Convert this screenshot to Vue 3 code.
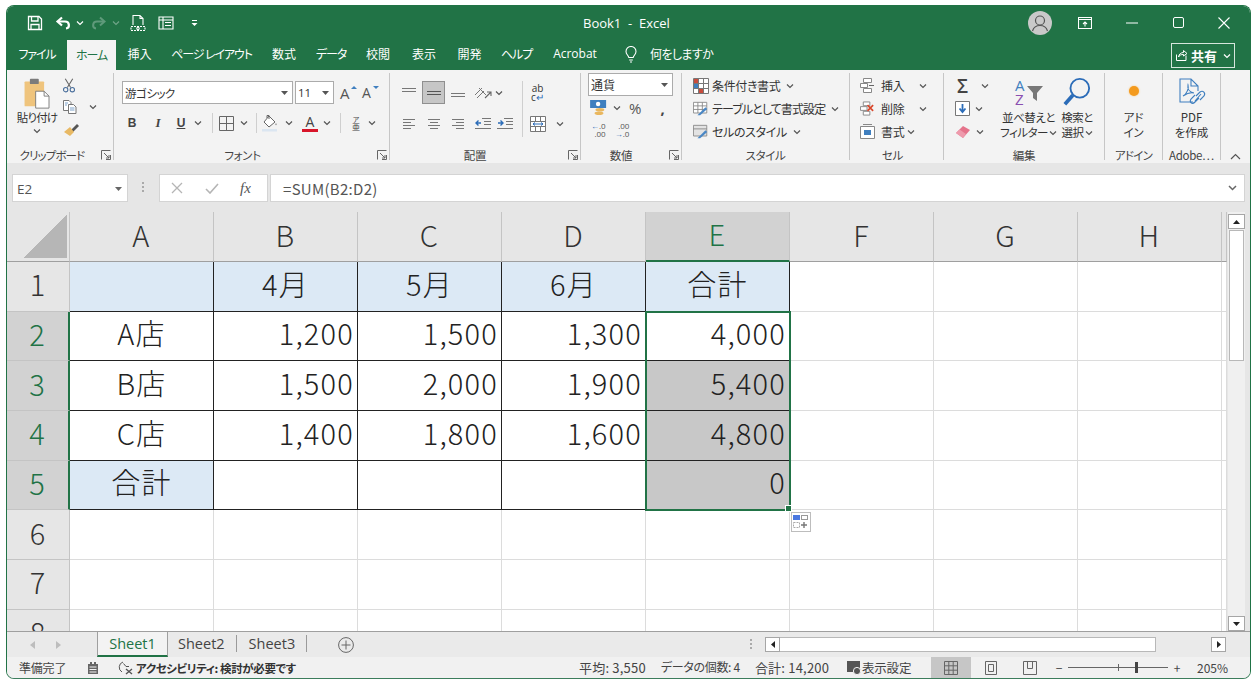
<script setup>
import { h } from 'vue'

// small ribbon chevron
const Chev = () => h('svg', { width: 8, height: 6, viewBox: '0 0 8 6' }, [
  h('path', { d: 'M1 1.5 L4 4.5 L7 1.5', fill: 'none', stroke: '#555', 'stroke-width': 1.2 })
])
// dialog launcher in the group label
const Launcher = () => h('svg', { width: 10, height: 10, viewBox: '0 0 10 10' }, [
  h('path', { d: 'M.5 9.5V.5H9.5M9.5 5V9.5H5M3 3L8 8M8 5V8H5', fill: 'none', stroke: '#666', 'stroke-width': 1 })
])

const tabs = ['ファイル', 'ホーム', '挿入', 'ページ レイアウト', '数式', 'データ', '校閲', '表示', '開発', 'ヘルプ', 'Acrobat']
const cols = ['A', 'B', 'C', 'D', 'E', 'F', 'G', 'H', 'I']
const table = [
  ['', '4月', '5月', '6月', '合計'],
  ['A店', '1,200', '1,500', '1,300', '4,000'],
  ['B店', '1,500', '2,000', '1,900', '5,400'],
  ['C店', '1,400', '1,800', '1,600', '4,800'],
  ['合計', '', '', '', '0']
]
const rowNums = [1, 2, 3, 4, 5, 6, 7, 8]

const isKana = t => /[ァ-ヶー]/.test(t)

function cellText(r, c) {
  return table[r - 1] && table[r - 1][c] !== undefined ? table[r - 1][c] : ''
}
function cellClass(r, c) {
  const inTable = r <= 5 && c <= 4
  return {
    dark: inTable,
    blue: inTable && (r === 1 || (r === 5 && c === 0)),
    center: r === 1 || c === 0,
    picked: c === 4 && r >= 3 && r <= 5
  }
}
</script>

<template>
  <div class="window">
    <!-- title bar -->
    <header class="titlebar">
      <div class="qat">
        <svg width="16" height="16" viewBox="0 0 16 16" fill="none" stroke="#fff" stroke-width="1.3"><path d="M1.5 1.5H12L14.5 4V14.5H1.5Z"/><path d="M4.5 1.5V6H11V1.5M4 14.5V9.5H12V14.5"/></svg>
        <svg class="q-undo" width="18" height="14" viewBox="0 0 18 14" fill="none" stroke="#fff" stroke-width="2.2"><path d="M7 1.5L2.5 5.5L7 9.5"/><path d="M3 5.5H10C15 5.5 15 12 11 12.5"/></svg>
        <Chev class="q-white" />
        <svg class="q-redo" width="18" height="14" viewBox="0 0 18 14" fill="none" stroke="#5f9a7b" stroke-width="2"><path d="M11 1.5L15.5 5.5L11 9.5"/><path d="M15 5.5H8C3 5.5 3 12 7 12.5"/></svg>
        <Chev class="q-dim" />
        <svg class="q-doc" width="16" height="18" viewBox="0 0 16 18" fill="none" stroke="#fff" stroke-width="1.1"><path d="M3 11V1.5H10L13 4.5V11M10 1.5V4.5H13"/><path d="M1 12.5H15V16.5H1Z" stroke-dasharray="2 1"/><circle cx="8" cy="14.5" r="1.2"/></svg>
        <svg class="q-form" width="16" height="14" viewBox="0 0 16 14" fill="none" stroke="#fff" stroke-width="1.1"><path d="M1 1H15V13H1ZM1 4H15M5 1V13M7 6.5H13M7 9.5H13"/></svg>
        <svg class="q-drop" width="7" height="8" viewBox="0 0 7 8" fill="#fff"><path d="M1 1H6V2H1ZM.5 4H6.5L3.5 7Z"/></svg>
      </div>
      <div class="doc-title">Book1 &nbsp;-&nbsp; Excel</div>
      <div class="win-btns">
        <span class="avatar">
          <svg width="24" height="24" viewBox="0 0 24 24" fill="none" stroke="#555" stroke-width="1.2"><circle cx="12" cy="9.5" r="4.5"/><path d="M4.5 20C6 15 9 14.5 12 14.5S18 15 19.5 20"/></svg>
        </span>
        <svg class="b-display" width="14" height="12" viewBox="0 0 14 12" fill="none" stroke="#fff" stroke-width="1.1"><path d="M.5 .5H13.5V11.5H.5ZM.5 2.5H13.5"/><path d="M7 9.5V5M5 7L7 5L9 7"/></svg>
        <svg class="b-min" width="12" height="2" viewBox="0 0 12 2" stroke="#fff"><path d="M0 1H12"/></svg>
        <svg class="b-max" width="11" height="11" viewBox="0 0 11 11" fill="none" stroke="#fff"><rect x=".5" y=".5" width="10" height="10" rx="1.5"/></svg>
        <svg class="b-close" width="12" height="12" viewBox="0 0 12 12" stroke="#fff" stroke-width="1.1"><path d="M.5 .5L11.5 11.5M11.5 .5L.5 11.5"/></svg>
      </div>
    </header>

    <!-- ribbon tabs -->
    <nav class="tabbar">
      <div class="tabs">
        <span v-for="(t, i) in tabs" :key="t" class="tab" :class="{ active: i === 1, kana: isKana(t) }">{{ t }}</span>
      </div>
      <svg class="bulb" width="12" height="18" viewBox="0 0 12 18" fill="none" stroke="#fff" stroke-width="1.1"><path d="M3.8 11.5C3.5 9.5 1 8.5 1 5.5A5 5 0 0 1 11 5.5C11 8.5 8.5 9.5 8.2 11.5ZM4.2 14H7.8M5 16H7"/></svg>
      <span class="tell">何をしますか</span>
      <span class="share">
        <svg width="13" height="13" viewBox="0 0 13 13" fill="none" stroke="#fff"><path d="M1.5 5.5V11.5H11V6.5M3.5 8C4 5 6 3.5 8.5 3.5V1.5L12 4.5L8.5 7V5.5C6 5.5 4.5 6 3.5 8Z"/></svg>
        <b>共有</b>
        <Chev class="q-white" />
      </span>
    </nav>

    <!-- ribbon -->
    <section class="ribbon">
      <div class="group g-clip">
        <div class="body clip-body">
          <div class="paste">
            <svg width="28" height="32" viewBox="0 0 30 36"><rect x="1" y="5" width="22" height="28" rx="1" fill="#efc47d"/><rect x="7" y="2" width="10" height="6" rx="1" fill="#7b7b7b"/><path d="M13.5 16H23L28.5 21.5V35H13.5Z" fill="#fff" stroke="#777"/><path d="M23 16V21.5H28.5" fill="none" stroke="#777"/></svg>
            <span class="paste-label">貼り付け</span>
            <Chev />
          </div>
          <div class="clip-tools">
            <svg width="14" height="15" viewBox="0 0 16 18" fill="none" stroke="#4a6f9c" stroke-width="1.3"><path d="M3.5 1L10 11.5M12.5 1L6 11.5" stroke="#666"/><circle cx="4" cy="14" r="2.6"/><circle cx="12" cy="14" r="2.6"/></svg>
            <span class="copy-row">
              <svg width="16" height="16" viewBox="0 0 16 16" fill="#fff" stroke="#777"><path d="M1.5 1.5H7L9 3.5V11.5H1.5Z"/><path d="M6.5 5.5H11.5L14 8V14.5H6.5Z"/><path d="M8 9H12.5M8 11H12.5M3 4H6M3 6H5" stroke="#7aa0c8"/></svg>
              <Chev />
            </span>
            <svg width="18" height="16" viewBox="0 0 18 16"><path d="M9 9L15 3L17 5L11 11Z" fill="#555"/><path d="M2 11L8 6L12 11L8 15Z" fill="#e8b964"/></svg>
          </div>
        </div>
        <div class="glabel">クリップボード<Launcher class="launch" /></div>
      </div>

      <div class="group g-font">
        <div class="body font-body">
          <div class="font-row">
            <span class="combo c-name"><span>游ゴシック</span><svg width="7" height="4" viewBox="0 0 7 4" fill="#555"><path d="M0 0H7L3.5 4Z"/></svg></span>
            <span class="combo c-size"><span>11</span><svg width="7" height="4" viewBox="0 0 7 4" fill="#555"><path d="M0 0H7L3.5 4Z"/></svg></span>
            <span class="grow-a">A<i class="up"></i></span>
            <span class="grow-a small">A<i class="down"></i></span>
          </div>
          <div class="font-tools">
            <b class="tool-b">B</b>
            <i class="tool-i">I</i>
            <u class="tool-u">U</u>
            <Chev />
            <span class="vsep"></span>
            <svg width="15" height="15" viewBox="0 0 15 15" fill="none" stroke="#666"><path d="M.5 .5H14.5V14.5H.5ZM7.5 .5V14.5M.5 7.5H14.5"/></svg>
            <Chev />
            <span class="vsep"></span>
            <svg width="18" height="18" viewBox="0 0 18 18" fill="none"><path d="M8 2L14 8L8 13L3 8Z" fill="#fff" stroke="#666"/><path d="M6 4V1.5H8V5" stroke="#666"/><path d="M15 9C17 12 13 12 15 9Z" fill="#777"/><rect x="1" y="15" width="15" height="2.5" fill="#dbe6f1"/></svg>
            <Chev />
            <span class="color-a">A</span>
            <Chev />
            <span class="vsep"></span>
            <span class="phonetic"><small>ア</small>亜</span>
            <Chev />
          </div>
        </div>
        <div class="glabel">フォント<Launcher class="launch" /></div>
      </div>

      <div class="group g-align">
        <div class="body align-body">
          <div class="align-grid">
            <svg class="ln" width="14" height="12" viewBox="0 0 14 12" stroke="#777"><path d="M0 1.5H14M0 4.5H14"/></svg>
            <span class="a-on"><svg width="14" height="12" viewBox="0 0 14 12" stroke="#555"><path d="M0 4.5H14M0 7.5H14"/></svg></span>
            <svg class="ln" width="14" height="12" viewBox="0 0 14 12" stroke="#777"><path d="M0 6.5H14M0 9.5H14"/></svg>
            <svg width="18" height="16" viewBox="0 0 18 16" fill="none" stroke="#777"><path d="M1 10L8 3M3 13L10 6M5 3L12 10" stroke-width="1"/><path d="M11 13L17 7M13 7H17V11" stroke="#666" stroke-width="1.1"/></svg>
            <Chev class="start" />
            <span class="vsep tall"></span>
            <span class="wrap-ab"><span>ab</span><span>c<em>↵</em></span></span>
            <span></span>

            <svg width="12" height="11" viewBox="0 0 12 11" stroke="#777"><path d="M0 1.5H12M0 4.5H8M0 7.5H12M0 10.5H8"/></svg>
            <svg width="12" height="11" viewBox="0 0 12 11" stroke="#777"><path d="M0 1.5H12M2 4.5H10M0 7.5H12M2 10.5H10"/></svg>
            <svg width="12" height="11" viewBox="0 0 12 11" stroke="#777"><path d="M0 1.5H12M4 4.5H12M0 7.5H12M4 10.5H12"/></svg>
            <svg width="16" height="13" viewBox="0 0 16 13" fill="none"><path d="M7 1.5H16M9 4.5H16M9 7.5H16M0 11.5H16" stroke="#777"/><path d="M6 6H1M3.5 3.5L1 6L3.5 8.5" stroke="#2b6cb8" stroke-width="1.4"/></svg>
            <svg width="16" height="13" viewBox="0 0 16 13" fill="none"><path d="M7 1.5H16M9 4.5H16M9 7.5H16M0 11.5H16" stroke="#777"/><path d="M1 6H6M3.5 3.5L6 6L3.5 8.5" stroke="#2b6cb8" stroke-width="1.4"/></svg>
            <svg width="16" height="16" viewBox="0 0 16 16" fill="#fff" stroke="#777"><path d="M.5 .5H15.5V15.5H.5ZM.5 5.5H15.5M.5 10.5H15.5M5.5 .5V5.5M10.5 .5V5.5M5.5 10.5V15.5M10.5 10.5V15.5"/><path d="M3 8H13M5 6.5L3 8L5 9.5M11 6.5L13 8L11 9.5" stroke="#2b6cb8"/></svg>
            <Chev />
          </div>
        </div>
        <div class="glabel">配置<Launcher class="launch" /></div>
      </div>

      <div class="group g-num">
        <div class="body num-body">
          <span class="combo c-num"><span>通貨</span><svg width="7" height="4" viewBox="0 0 7 4" fill="#555"><path d="M0 0H7L3.5 4Z"/></svg></span>
          <div class="num-row">
            <svg width="18" height="16" viewBox="0 0 20 18"><rect x="0" y="0" width="18" height="9" fill="#3f7fbf"/><circle cx="9" cy="4.5" r="2.5" fill="#fff"/><ellipse cx="11" cy="11" rx="5" ry="2" fill="#e9b75f"/><ellipse cx="10" cy="15" rx="5" ry="2" fill="#e9b75f"/></svg>
            <Chev />
            <span class="pct">%</span>
            <b class="comma">,</b>
          </div>
          <div class="num-row dec">
            <span class="dec-ic"><span><em>←</em>.0</span><span>.00</span></span>
            <span class="dec-ic"><span>.00</span><span><em>→</em>.0</span></span>
          </div>
        </div>
        <div class="glabel">数値<Launcher class="launch" /></div>
      </div>

      <div class="group g-style">
        <div class="body stack">
          <div class="srow">
            <svg width="16" height="16" viewBox="0 0 16 16" fill="#fff" stroke="#777"><path d="M.5 .5H15.5V15.5H.5ZM.5 5.5H15.5M.5 10.5H15.5M5.5 .5V15.5M10.5 .5V15.5"/><rect x="1" y="1" width="4" height="4" fill="#c94c3c" stroke="none"/><rect x="1" y="6" width="4" height="4" fill="#3f7fbf" stroke="none"/><rect x="6" y="11" width="4" height="4" fill="#c94c3c" stroke="none"/></svg>
            <span>条件付き書式</span><Chev />
          </div>
          <div class="srow tight">
            <svg width="16" height="16" viewBox="0 0 18 16" fill="#fff" stroke="#888"><path d="M.5 .5H15.5V12.5H.5ZM.5 4.5H15.5M.5 8.5H15.5M5.5 .5V12.5M10.5 .5V12.5"/><path d="M5 15L14 6L16 8L8 15Z" fill="#4a87c5" stroke="none"/></svg>
            <span>テーブルとして書式設定</span><Chev />
          </div>
          <div class="srow">
            <svg width="16" height="16" viewBox="0 0 18 16" fill="#e3e3e3" stroke="#888"><path d="M.5 .5H15.5V12.5H.5ZM.5 4.5H15.5"/><path d="M5 15L14 6L16 8L8 15Z" fill="#4a87c5" stroke="none"/></svg>
            <span>セルのスタイル</span><Chev />
          </div>
        </div>
        <div class="glabel">スタイル</div>
      </div>

      <div class="group g-cell">
        <div class="body stack cell-stack">
          <div class="srow">
            <svg width="15" height="15" viewBox="0 0 15 15" fill="#fff" stroke="#888"><path d="M3.5 .5H11.5V4.5H3.5ZM.5 5.5H7.5V9.5H.5ZM3.5 10.5H11.5V14.5H3.5Z"/><path d="M9 7.5H14" stroke="#666"/></svg>
            <span>挿入</span><Chev class="far" />
          </div>
          <div class="srow">
            <svg width="15" height="15" viewBox="0 0 16 15" fill="#fff" stroke="#888"><path d="M3.5 .5H10.5V4.5H3.5ZM.5 5.5H7.5V9.5H.5ZM3.5 10.5H10.5V14.5H3.5Z"/><path d="M8 4L14 10M14 4L8 10" stroke="#d9472b" stroke-width="1.8"/></svg>
            <span>削除</span><Chev class="far" />
          </div>
          <div class="srow">
            <svg width="15" height="15" viewBox="0 0 15 15" fill="#fff" stroke="#888"><path d="M.5 2.5H14.5V14.5H.5ZM3 .5H12"/><rect x="4" y="6" width="7" height="5" fill="#3f7fbf" stroke="none"/></svg>
            <span>書式</span><Chev class="near" />
          </div>
        </div>
        <div class="glabel">セル</div>
      </div>

      <div class="group g-edit">
        <div class="body edit-body">
          <div class="edit-stack">
            <div class="erow"><span class="sigma">Σ</span><Chev class="sig-chev" /></div>
            <div class="erow">
              <svg width="15" height="15" viewBox="0 0 15 15" fill="#fff" stroke="#777"><path d="M.5 .5H14.5V14.5H.5Z"/><path d="M7.5 3V10M4.5 7.5L7.5 11L10.5 7.5" stroke="#2b6cb8" stroke-width="1.8" fill="none"/></svg>
              <Chev />
            </div>
            <div class="erow">
              <svg width="16" height="14" viewBox="0 0 16 14"><path d="M1 8L8 1L15 5L8 13Z" fill="#e5738b"/><path d="M1 8L4.5 4.5L11 9L8 13Z" fill="#ee9aac"/></svg>
              <Chev />
            </div>
          </div>
          <div class="big sort">
            <svg width="30" height="30" viewBox="0 0 30 30"><text x="1" y="14" class="az-a">A</text><text x="1" y="28" class="az-z">Z</text><path d="M13 9H29L23 16V24L19 21V16Z" fill="#777"/></svg>
            <span>並べ替えと</span>
            <span>フィルター <Chev /></span>
          </div>
          <div class="big find">
            <svg width="28" height="30" viewBox="0 0 30 32" fill="none"><circle cx="18" cy="12" r="10" stroke="#2b6cb8" stroke-width="2"/><path d="M10.5 19.5L2 29" stroke="#2b6cb8" stroke-width="4"/></svg>
            <span>検索と</span>
            <span>選択 <Chev /></span>
          </div>
        </div>
        <div class="glabel">編集</div>
      </div>

      <div class="group g-addin">
        <div class="body big-one">
          <span class="dot"></span>
          <span>アド</span>
          <span>イン</span>
        </div>
        <div class="glabel">アドイン</div>
      </div>

      <div class="group g-adobe">
        <div class="body big-one">
          <svg width="30" height="30" viewBox="0 0 30 30" fill="none" stroke="#3f7fbf" stroke-width="1.1"><path d="M16 25H3V2H14L21 9V14M14 2V9H21"/><path d="M6 19C10 17 12 11 11 8C10 12 13 15 17 16C13 15 9 17 6 19Z"/><path d="M19 19L23 15C26 13 29 16 27 19L23 23M22 21L18 25C15 28 12 25 14 22L18 18M18 24L24 17"/></svg>
          <span>PDF</span>
          <span>を作成</span>
        </div>
        <div class="glabel">Adobe⋯</div>
      </div>

      <div class="collapse">
        <svg width="11" height="7" viewBox="0 0 11 7" fill="none" stroke="#555" stroke-width="1.2"><path d="M1 6L5.5 1.5L10 6"/></svg>
      </div>
    </section>

    <!-- formula bar -->
    <div class="formula">
      <div class="namebox"><span>E2</span><svg width="7" height="4" viewBox="0 0 7 4" fill="#666"><path d="M0 0H7L3.5 4Z"/></svg></div>
      <span class="grip"></span>
      <div class="fx-btns">
        <svg width="12" height="12" viewBox="0 0 12 12" stroke="#b5b5b5" stroke-width="1.3"><path d="M1 1L11 11M11 1L1 11"/></svg>
        <svg width="14" height="11" viewBox="0 0 14 11" fill="none" stroke="#b5b5b5" stroke-width="1.6"><path d="M1 6L5 10L13 1"/></svg>
        <i class="fx">fx</i>
      </div>
      <div class="finput"><span>=SUM(B2:D2)</span>
        <svg width="9" height="6" viewBox="0 0 9 6" fill="none" stroke="#666" stroke-width="1.5"><path d="M1 1L4.5 4.5L8 1"/></svg>
      </div>
    </div>

    <!-- sheet -->
    <div class="sheet-wrap">
      <div class="sheet">
        <div class="corner"><span class="tri"></span></div>
        <div v-for="c in cols" :key="c" class="colh" :class="{ on: c === 'E' }">{{ c === 'I' ? '' : c }}</div>
        <template v-for="r in rowNums" :key="r">
          <div class="rowh" :class="{ on: r >= 2 && r <= 5 }">{{ r }}</div>
          <div
            v-for="(c, ci) in cols"
            :key="c"
            class="cell"
            :class="cellClass(r, ci)"
          >{{ cellText(r, ci) }}</div>
        </template>
        <!-- same tracks as the sheet, only holds the selection frame -->
        <div class="sel-layer">
          <div class="selection">
            <span class="handle"></span>
            <span class="quick">
              <svg width="16" height="14" viewBox="0 0 16 14" fill="none"><rect x="0" y="0" width="7" height="5" fill="#4a78e0"/><rect x="8.5" y=".5" width="6" height="4" stroke="#999"/><rect x=".5" y="7.5" width="6" height="5" stroke="#aaa" stroke-dasharray="2 1"/><path d="M11 7V13M8 10H14" stroke="#777" stroke-width="1.4"/></svg>
            </span>
          </div>
        </div>
      </div>
      <div class="vscroll">
        <span class="sbtn"><svg width="7" height="4" viewBox="0 0 7 4" fill="#222"><path d="M0 4H7L3.5 0Z"/></svg></span>
        <span class="thumb"></span>
        <span class="track"></span>
        <span class="sbtn"><svg width="7" height="4" viewBox="0 0 7 4" fill="#222"><path d="M0 0H7L3.5 4Z"/></svg></span>
      </div>
    </div>

    <!-- sheet tabs -->
    <div class="sheetbar">
      <div class="nav-arrows">
        <svg width="5" height="8" viewBox="0 0 5 8" fill="#bdbdbd"><path d="M5 0V8L0 4Z"/></svg>
        <svg width="5" height="8" viewBox="0 0 5 8" fill="#bdbdbd"><path d="M0 0V8L5 4Z"/></svg>
      </div>
      <span class="stab on">Sheet1</span>
      <span class="stab">Sheet2</span>
      <span class="stab bar">Sheet3</span>
      <svg class="plus" width="16" height="16" viewBox="0 0 16 16" fill="none" stroke="#666"><circle cx="8" cy="8" r="7.4"/><path d="M8 3.5V12.5M3.5 8H12.5"/></svg>
      <span class="hgrip"></span>
      <div class="hscroll">
        <span class="hbtn"><svg width="4" height="7" viewBox="0 0 4 7" fill="#222"><path d="M4 0V7L0 3.5Z"/></svg></span>
        <span class="htrack"></span>
        <span class="hgap"></span>
        <span class="hbtn"><svg width="4" height="7" viewBox="0 0 4 7" fill="#222"><path d="M0 0V7L4 3.5Z"/></svg></span>
      </div>
    </div>

    <!-- status bar -->
    <footer class="status">
      <span class="st-ready">準備完了</span>
      <svg class="st-macro" width="12" height="12" viewBox="0 0 12 12" fill="#666"><path d="M1 2H11V12H1Z"/><path d="M3 0H5V3H3ZM7 0H9V3H7Z"/><path d="M2.5 5H9.5M2.5 7.5H9.5M2.5 10H9.5" stroke="#f3f3f3"/></svg>
      <svg class="st-acc" width="16" height="15" viewBox="0 0 16 15" fill="none" stroke="#555"><path d="M6 2A5.5 5.5 0 0 0 5 12"/><path d="M6.5 3.5L9 6.5H12" /><path d="M9 9L15 14M15 9L9 14" stroke-width="1.4"/></svg>
      <b class="st-acc-text">アクセシビリティ: 検討が必要です</b>
      <span class="st-sum">
        <span class="wide">平均: 3,550</span>
        <span class="narrow">データの個数: 4</span>
        <span class="wide">合計: 14,200</span>
      </span>
      <svg class="st-disp" width="14" height="16" viewBox="0 0 14 16"><rect x="0" y="1" width="13" height="11" fill="#555"/><circle cx="10" cy="11" r="3.6" fill="#555" stroke="#f3f3f3"/></svg>
      <span class="st-dtext">表示設定</span>
      <span class="view on"><svg width="14" height="14" viewBox="0 0 14 14" fill="none" stroke="#666"><path d="M.5 .5H13.5V13.5H.5ZM4.8 .5V13.5M9.2 .5V13.5M.5 4.8H13.5M.5 9.2H13.5"/></svg></span>
      <span class="view"><svg width="12" height="14" viewBox="0 0 12 14" fill="none" stroke="#666"><path d="M.5 .5H11.5V13.5H.5Z"/><path d="M3.5 3.5H8.5V10.5H3.5Z"/></svg></span>
      <span class="view"><svg width="14" height="14" viewBox="0 0 14 14" fill="none" stroke="#666"><path d="M.5 .5H13.5V13.5H.5ZM4.5 .5V7.5H9.5V.5"/></svg></span>
      <span class="zoom-minus">−</span>
      <span class="slider"><i class="tick"></i><i class="knob"></i></span>
      <span class="zoom-plus">+</span>
      <span class="zoom-pct">205%</span>
    </footer>
  </div>
</template>

<style scoped>
.window {
  --green: #217346;
  width: 1245px;
  height: 674px;
  margin: 5px 0 0 6px;
  box-sizing: border-box;
  border: 1px solid var(--green);
  border-bottom-color: #3c7d5c;
  border-radius: 8px;
  overflow: hidden;
  display: flex;
  flex-direction: column;
  font-family: "Noto Sans CJK JP", "Noto Sans", sans-serif;
  font-feature-settings: "palt";
  color: #333;
  background: #e6e6e6;
}
svg { display: block; flex-shrink: 0; }

/* title bar */
.titlebar {
  height: 33px;
  flex-shrink: 0;
  background: var(--green);
  display: flex;
  align-items: center;
  color: #fff;
  position: relative;
}
.qat { display: flex; align-items: center; padding-left: 20px; }
.q-undo { margin-left: 12px; }
.q-white { margin-left: 3px; filter: brightness(0) invert(1); }
.q-dim { margin-left: 5px; opacity: .35; filter: brightness(0) invert(1); }
.q-redo { margin-left: 5px; }
.q-doc { margin-left: 10px; }
.q-form { margin-left: 12px; }
.q-drop { margin-left: 17px; }
.doc-title {
  position: absolute;
  left: 576px;
  top: 9px;
  font: 13px/17px "Open Sans", sans-serif;
  white-space: nowrap;
}
.win-btns { margin-left: auto; display: flex; align-items: center; padding-right: 20px; }
.avatar {
  width: 24px;
  height: 24px;
  border-radius: 50%;
  background: #c9c9c9;
  margin-right: 26px;
}
.b-min { margin-left: 34px; }
.b-max { margin-left: 35px; }
.b-close { margin-left: 34px; }

/* ribbon tabs */
.tabbar {
  height: 31px;
  flex-shrink: 0;
  background: var(--green);
  display: flex;
  align-items: flex-end;
  color: #fff;
  font-size: 12px;
}
.tabs {
  display: grid;
  grid-template-columns: 60px 49px 47px 97px 48px 46px 48px 44px 47px 47px 70px;
  height: 31px;
  width: 603px;
}
.tab {
  display: flex;
  align-items: center;
  justify-content: center;
  white-space: nowrap;
  padding-bottom: 2px;
}
.tab.kana { letter-spacing: -1.1px; }
.tab.active { background: #f3f3f3; color: #217346; margin-top: 1px; }
.tab:last-child { font-family: "Open Sans", sans-serif; }
.bulb { margin: 0 0 6px 15px; }
.tell { margin: 0 0 8px 13px; letter-spacing: -0.6px; white-space: nowrap; }
.share {
  margin: 0 15px 2px auto;
  width: 64px;
  height: 25px;
  box-sizing: border-box;
  border: 1px solid #d6e6dd;
  display: flex;
  align-items: center;
  justify-content: center;
  gap: 3px;
  font-size: 13px;
}

/* ribbon */
.ribbon {
  height: 93px;
  flex-shrink: 0;
  background: #f3f3f3;
  display: flex;
  font-size: 12px;
}
.group {
  flex-shrink: 0;
  box-sizing: border-box;
  border-right: 1px solid #c6c6c6;
  margin: 3px 0 3px;
  display: flex;
  flex-direction: column;
}
.body { height: 71px; flex-shrink: 0; box-sizing: border-box; margin-top: -3px; }
.glabel {
  position: relative;
  height: 16px;
  margin-top: 6px;
  flex-shrink: 0;
  font-size: 11.5px;
  line-height: 16px;
  text-align: center;
  color: #444;
  white-space: nowrap;
  letter-spacing: -0.3px;
}
.launch { position: absolute; right: 2px; top: 3px; }
.g-clip { width: 107px; }
.g-font { width: 276px; }
.g-align { width: 191px; }
.g-num { width: 101px; }
.g-style { width: 168px; }
.g-cell { width: 94px; }
.g-edit { width: 161px; }
.g-addin { width: 58px; }
.g-adobe { width: 58px; }
.g-clip .glabel { padding-right: 16px; letter-spacing: -0.9px; }
.g-font .glabel { padding-right: 18px; }
.g-align .glabel { padding-right: 20px; }
.g-num .glabel { padding-right: 20px; }
.g-cell .glabel { padding-right: 8px; }
.g-addin .glabel { letter-spacing: -0.8px; }
.collapse { flex: 1; display: flex; align-items: flex-end; justify-content: center; padding-bottom: 3px; }

.clip-body { display: flex; padding-left: 9px; }
.paste { width: 42px; display: flex; flex-direction: column; align-items: center; padding-top: 7px; }
.paste-label { font-size: 11.5px; line-height: 14px; margin-top: 1px; white-space: nowrap; letter-spacing: -0.8px; }
.paste .paste-label + svg { margin-top: 4px; }
.clip-tools { padding: 8px 0 0 4px; display: flex; flex-direction: column; gap: 6px; }
.copy-row { display: flex; align-items: center; gap: 11px; }

.combo {
  box-sizing: border-box;
  display: flex;
  align-items: center;
  justify-content: space-between;
  background: #fff;
  border: 1px solid #ababab;
  padding: 0 4px 0 2px;
  height: 23px;
  font-size: 11.5px;
}
.font-body { padding: 11px 0 0 8px; }
.font-row { display: flex; align-items: center; height: 23px; }
.c-name { width: 171px; letter-spacing: -0.5px; }
.c-size { width: 39px; margin-left: 2px; font-family: "Open Sans", sans-serif; }
.grow-a { position: relative; margin-left: 6px; width: 18px; font: 15px "Open Sans", sans-serif; color: #555; }
.grow-a.small { margin-left: 4px; font-size: 14px; }
.grow-a i {
  position: absolute;
  right: 1px;
  top: 3px;
  border-left: 3px solid transparent;
  border-right: 3px solid transparent;
}
.grow-a .up { border-bottom: 3px solid #3f7fbf; }
.grow-a .down { border-top: 3px solid #3f7fbf; }
.font-tools {
  display: grid;
  grid-template-columns: 20px 32px 14px 20px 8px 20px 16px 8px 20px 18px 24px 10px 16px 16px 16px;
  justify-items: center;
  align-items: center;
  height: 22px;
  margin-top: 8px;
  color: #444;
}
.tool-b { font: bold 12px "Liberation Sans", sans-serif; }
.tool-i { font: italic bold 13px "Liberation Serif", serif; }
.tool-u { font: bold 12px "Liberation Sans", sans-serif; }
.color-a {
  font: 14px/15px "Open Sans", sans-serif;
  border-bottom: 3px solid #d8152a;
  width: 16px;
  text-align: center;
}
.phonetic { display: flex; flex-direction: column; font-size: 8px; line-height: 8px; align-items: center; }
.phonetic small { font-size: 7px; }
.vsep { width: 1px; height: 20px; background: #cfcfcf; }
.vsep.tall { height: 56px; grid-row: span 2; align-self: start; }

.align-body { padding: 11px 0 0 7px; }
.align-grid {
  display: grid;
  grid-template-columns: 24px 25px 24px 25px 20px 14px 17px 28px;
  grid-template-rows: 23px 23px;
  row-gap: 8px;
  justify-items: center;
  align-items: center;
}
.align-grid .start { justify-self: start; }
.a-on { width: 23px; height: 23px; background: #c6c6c6; border: 1px solid #8f8f8f; box-sizing: border-box; display: flex; align-items: center; justify-content: center; }
.wrap-ab { display: flex; flex-direction: column; font: 10px/9px "Open Sans", sans-serif; align-items: center; }
.wrap-ab em { color: #2b6cb8; font-style: normal; }

.num-body { padding: 3px 0 0 7px; }
.c-num { width: 85px; font-size: 12px; }
.num-row { display: flex; align-items: center; height: 24px; padding-left: 2px; }
.num-row > svg:nth-child(2) { margin-left: 5px; }
.pct { margin-left: 8px; font: 15px "Open Sans", sans-serif; color: #555; }
.comma { margin-left: 19px; font: bold 15px/12px "Open Sans", sans-serif; color: #444; }
.dec { gap: 9px; padding-left: 3px; height: 20px; }
.dec-ic { display: flex; flex-direction: column; align-items: flex-end; font: 8px/8px "Open Sans", sans-serif; color: #555; }
.dec-ic em { color: #2b6cb8; font-style: normal; }

.stack { padding: 4px 0 0 11px; }
.srow { display: flex; align-items: center; height: 23px; gap: 3px; white-space: nowrap; font-size: 12px; letter-spacing: -0.35px; }
.srow > span { margin-right: 3px; }
.srow.tight { letter-spacing: -0.9px; }
.cell-stack { padding-left: 10px; }
.cell-stack .srow { gap: 6px; }
.cell-stack .far { margin-left: 6px; }
.cell-stack .near { margin-left: -6px; }

.edit-body { display: flex; padding: 4px 0 0 11px; }
.edit-stack { width: 50px; flex-shrink: 0; }
.erow { display: flex; align-items: center; height: 23px; gap: 5px; }
.sigma { font: 600 19px/20px "Open Sans", sans-serif; color: #444; width: 15px; text-align: center; }
.sig-chev { margin-left: 6px; }
.big { display: flex; flex-direction: column; align-items: center; font-size: 11.5px; line-height: 15px; white-space: nowrap; letter-spacing: -0.5px; flex-shrink: 0; }
.big > svg { margin: 3px 0 3px; }
.big span { display: inline-flex; align-items: center; gap: 1px; }
.sort { width: 61px; margin-left: -7px; }
.find { width: 40px; margin-left: -2px; }
.az-a { font: 15px "Open Sans", sans-serif; fill: #3f7fbf; }
.az-z { font: 15px "Open Sans", sans-serif; fill: #8a4fb0; }

.big-one { display: flex; flex-direction: column; align-items: center; font-size: 11.5px; line-height: 15px; padding-top: 7px; }
.big-one > svg { margin-bottom: 3px; }
.dot { width: 10px; height: 10px; border-radius: 50%; background: #f39a1e; margin: 9px 0 14px; box-shadow: 0 0 2px #f9c070; }

/* formula bar */
.formula {
  height: 49px;
  flex-shrink: 0;
  background: #e6e6e6;
  display: flex;
  align-items: flex-start;
  padding: 11px 5px 0 5px;
  box-sizing: border-box;
}
.namebox {
  width: 116px;
  height: 28px;
  box-sizing: border-box;
  background: #fff;
  border: 1px solid #d4d4d4;
  display: flex;
  align-items: center;
  justify-content: space-between;
  padding: 1px 5px 0 4px;
  font: 13.5px "Open Sans", sans-serif;
  color: #555;
}
.grip {
  width: 2px;
  height: 11px;
  margin: 8px 15px 0 14px;
  background: repeating-linear-gradient(#aaa 0 2px, transparent 2px 4px);
}
.fx-btns {
  width: 109px;
  height: 28px;
  box-sizing: border-box;
  background: #fff;
  border: 1px solid #d4d4d4;
  display: flex;
  align-items: center;
  padding-left: 11px;
  gap: 22px;
}
.fx { font: italic 15px "Liberation Serif", serif; color: #555; margin-left: -1px; }
.finput {
  flex: 1;
  height: 28px;
  margin-left: 2px;
  box-sizing: border-box;
  background: #fff;
  border: 1px solid #d4d4d4;
  display: flex;
  align-items: center;
  justify-content: space-between;
  padding: 0 7px 0 12px;
  font-size: 15px;
  letter-spacing: .3px;
  color: #555;
}

/* sheet */
.sheet-wrap { height: 419px; flex-shrink: 0; display: flex; overflow: hidden; }
.sheet,
.sel-layer {
  display: grid;
  grid-template-columns: 63px repeat(8, 144px) 1fr;
  grid-template-rows: 50px;
  grid-auto-rows: 49.67px;
}
.sheet {
  position: relative;
  width: 1220px;
  flex-shrink: 0;
  background: #fff;
  font-size: 29px;
  font-weight: 300;
  color: #222;
  overflow: hidden;
  letter-spacing: 1.2px;
}
.sel-layer { position: absolute; inset: 0; pointer-events: none; }
.corner {
  background: #e6e6e6;
  border-right: 1px solid #c4c4c4;
  border-bottom: 1px solid #9f9f9f;
  display: flex;
  align-items: flex-end;
  justify-content: flex-end;
  padding: 0 2px 3px 0;
  box-sizing: border-box;
}
.tri {
  width: 43px;
  height: 43px;
  background: linear-gradient(to bottom right, transparent 50%, #b6b6b6 50%);
}
.colh {
  background: #e6e6e6;
  border-right: 1px solid #c4c4c4;
  border-bottom: 1px solid #9f9f9f;
  box-sizing: border-box;
  display: flex;
  align-items: center;
  justify-content: center;
  padding-bottom: 6px;
  color: #333;
}
.colh.on { background: #d2d2d2; color: var(--green); border-bottom: 2px solid var(--green); }
.rowh {
  background: #e6e6e6;
  border-right: 1px solid #c4c4c4;
  border-bottom: 1px solid #c4c4c4;
  box-sizing: border-box;
  display: flex;
  align-items: center;
  justify-content: center;
  padding-bottom: 6px;
  color: #333;
}
.rowh.on { background: #d2d2d2; color: var(--green); border-right: 2px solid var(--green); }
.cell {
  border-right: 1px solid #dcdcdc;
  border-bottom: 1px solid #dcdcdc;
  box-sizing: border-box;
  display: flex;
  align-items: center;
  justify-content: flex-end;
  padding: 0 3px 7px 0;
  white-space: nowrap;
}
.cell.center { justify-content: center; padding-right: 0; }
.cell.dark { border-color: #222; }
.cell.blue { background: #dce9f5; }
.cell.picked { background: #c8c8c8; }
.selection {
  grid-column: 6;
  grid-row: 3 / 7;
  margin: -1px;
  border: 2px solid var(--green);
  position: relative;
}
.handle {
  position: absolute;
  right: -3px;
  bottom: -3px;
  width: 5px;
  height: 5px;
  background: var(--green);
  border: 1px solid #fff;
}
.quick {
  position: absolute;
  left: 100%;
  top: 100%;
  margin: 3px 0 0 2px;
  width: 20px;
  height: 20px;
  box-sizing: border-box;
  background: #fff;
  border: 1px solid #bdbdbd;
  display: flex;
  align-items: center;
  justify-content: center;
}
.vscroll {
  width: 17px;
  margin-left: 1px;
  background: #f0f0f0;
  display: flex;
  flex-direction: column;
}
.sbtn {
  height: 15px;
  flex-shrink: 0;
  box-sizing: border-box;
  background: #fff;
  border: 1px solid #a6a6a6;
  display: flex;
  align-items: center;
  justify-content: center;
}
.sbtn:first-child { margin-top: 2px; }
.thumb { height: 131px; margin: 1px 1px 0; background: #fff; border: 1px solid #b8b8b8; box-sizing: border-box; flex-shrink: 0; }
.track { flex: 1; }

/* sheet tabs */
.sheetbar {
  height: 26px;
  flex-shrink: 0;
  box-sizing: border-box;
  background: #eaeaea;
  border-top: 1px solid #9f9f9f;
  display: flex;
  align-items: center;
  font: 14.5px "Open Sans", sans-serif;
  color: #444;
}
.nav-arrows { display: flex; gap: 21px; padding-left: 23px; width: 90px; box-sizing: border-box; }
.stab { height: 24px; box-sizing: border-box; padding: 0 12px; display: flex; align-items: center; position: relative; margin-top: -2px; }
.stab::after { content: ''; position: absolute; right: 0; top: 3px; height: 17px; width: 1px; background: #9a9a9a; }
.stab.on {
  width: 71px;
  justify-content: center;
  padding: 0;
  background: #f3f3f3;
  color: var(--green);
  border: 1px solid #9f9f9f;
  border-top: 0;
  border-bottom: 2px solid var(--green);
  margin: -1px -2px 0 0;
  height: 25px;
}
.stab.on::after { display: none; }
.stab.on + .stab { background: transparent; }
.plus { margin-left: 31px; }
.hgrip {
  width: 2px;
  height: 11px;
  margin-left: 396px;
  background: repeating-linear-gradient(#aaa 0 2px, transparent 2px 4px);
}
.hscroll { display: flex; align-items: center; margin-left: 13px; }
.hbtn {
  width: 15px;
  height: 15px;
  box-sizing: border-box;
  background: #fff;
  border: 1px solid #a6a6a6;
  display: flex;
  align-items: center;
  justify-content: center;
}
.htrack { width: 376px; height: 15px; box-sizing: border-box; background: #fff; border: 1px solid #b8b8b8; border-left: 0; }
.hgap { width: 55px; }

/* status bar */
.status {
  flex: 1;
  background: #f1f1f1;
  display: flex;
  align-items: center;
  font-size: 12px;
  color: #444;
  white-space: nowrap;
  letter-spacing: -0.2px;
}
.st-ready { margin-left: 12px; width: 48px; }
.st-macro { margin-left: 20px; }
.st-acc { margin-left: 18px; }
.st-acc-text { margin-left: 3px; width: 162px; font-size: 11.5px; letter-spacing: -0.4px; color: #333; }
.st-sum { margin-left: 281px; display: flex; gap: 15px; width: 249px; }
.st-sum .wide { font-size: 13px; letter-spacing: .2px; }
.st-sum .narrow { letter-spacing: -0.3px; }
.st-disp { margin-left: 19px; }
.st-dtext { margin-left: 1px; width: 50px; font-size: 12.5px; }
.view { width: 39px; height: 21px; display: flex; align-items: center; justify-content: center; }
.view.on { background: #c6c6c6; margin-left: 19px; width: 40px; }
.zoom-minus { margin-left: 5px; width: 10px; text-align: center; }
.slider { position: relative; width: 100px; height: 1px; background: #666; margin-left: 4px; }
.tick { position: absolute; left: 50px; top: -3px; width: 1px; height: 7px; background: #666; }
.knob { position: absolute; left: 67px; top: -5px; width: 3px; height: 11px; background: #444; }
.zoom-plus { margin-left: 4px; width: 10px; text-align: center; }
.zoom-pct { margin-left: 15px; letter-spacing: 0; }
</style>

<style>
html, body { background: #fff; overflow: hidden; }
</style>
